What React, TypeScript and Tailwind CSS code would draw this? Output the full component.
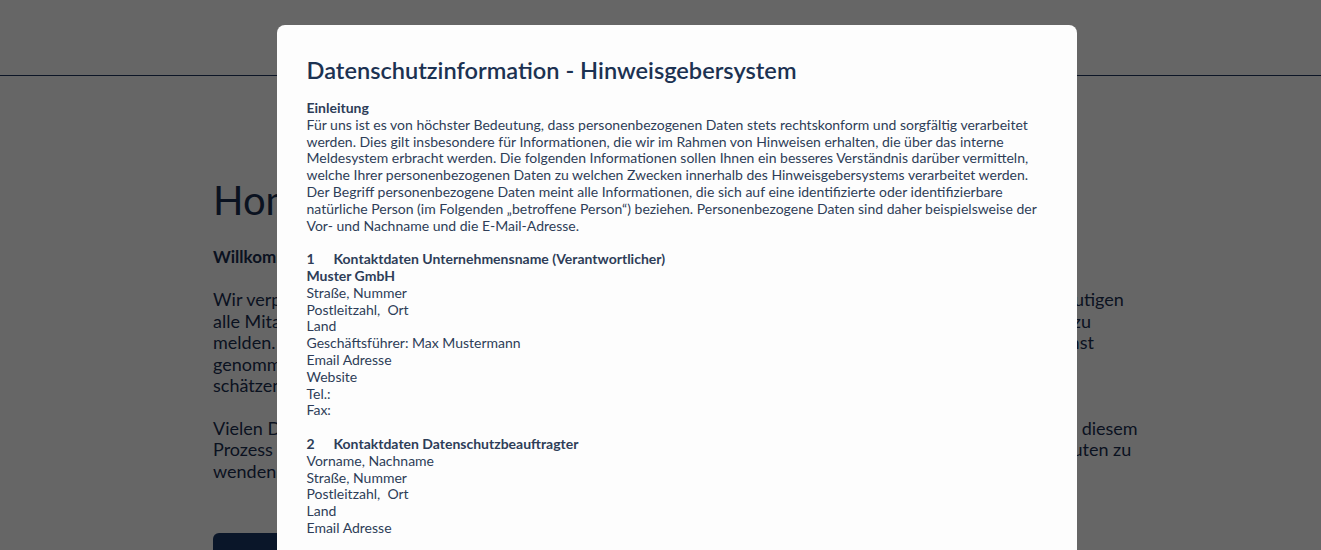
import React from "react";

const font = { fontFamily: "Lato, 'Noto Sans', sans-serif" };

function Line(props: { children: React.ReactNode; bold?: boolean }) {
  return <p className={props.bold ? "font-bold" : ""}>{props.children}</p>;
}

function Heading(props: { num: string; title: string }) {
  return (
    <p className="font-bold">
      <span className="inline-block w-[27px]">{props.num}</span>
      {props.title}
    </p>
  );
}

function Background() {
  return (
    <div className="min-h-[550px] bg-white text-[#1b2f52]">
      <header className="h-[76px] border-b border-[#1e3560]" />
      <main className="pl-[213px] pt-[100px]">
        <h1 className="text-[40px] leading-[48px]">Home</h1>
        <p className="mt-[21px] text-[17px] font-bold leading-6">
          Willkommen in unserem Hinweisgebersystem
        </p>
        <p className="mt-[20px] text-[18px] leading-[21.5px]">
          Wir verpflichten uns zu Integrität und Transparenz in allen Bereichen unseres Unternehmens und deshalb ermutigen
          <br />
          alle Mitarbeitenden sowie externe Partner, Hinweise auf mögliches Fehlverhalten stets vertraulich und sicher zu
          <br />
          melden. Jede Meldung wird von uns sorgfältig geprüft, mit der gebotenen Vertraulichkeit behandelt und so ernst
          <br />
          genommen. Ihre Identität wird dabei geschützt, sofern Sie dies wünschen. Ihr Vertrauen bedeutet uns sehr viel
          <br />
          schätzen Ihren Beitrag zu einer offenen Unternehmenskultur.
        </p>
        <p className="mt-[21px] text-[18px] leading-[21.5px]">
          Vielen Dank für Ihre Unterstützung. Bei Fragen zum Ablauf können Sie sich gerne auch jederzeit vertraulich zu diesem
          <br />
          Prozess informieren oder sich gerne jederzeit direkt an unsere zuständigen Ansprechpartner und Vertrauensleuten zu
          <br />
          wenden.
        </p>
        <button className="mt-[51px] h-[44px] w-[170px] rounded-md bg-[#1b3766]" />
      </main>
    </div>
  );
}

function Modal() {
  return (
    <div className="fixed inset-0 flex justify-center overflow-hidden bg-black/60 pl-[32px] pt-[25px]">
      <div className="h-[700px] w-[800px] rounded-lg bg-[#fdfdfd] px-[30px] pt-[30px]">
        <h2 className="text-[23.6px] font-semibold leading-[30px] text-[#1c3252]">
          Datenschutzinformation - Hinweisgebersystem
        </h2>
        <div className="mt-[15px] text-[14px] leading-[16.8px] text-[#2e3d58]">
          <Line bold>Einleitung</Line>
          <p>
            Für uns ist es von höchster Bedeutung, dass personenbezogenen Daten stets rechtskonform und sorgfältig
            verarbeitet werden. Dies gilt insbesondere für Informationen, die wir im Rahmen von Hinweisen erhalten, die
            über das interne Meldesystem erbracht werden. Die folgenden Informationen sollen Ihnen ein besseres
            Verständnis darüber vermitteln, welche Ihrer personenbezogenen Daten zu welchen Zwecken innerhalb des
            Hinweisgebersystems verarbeitet werden. Der Begriff personenbezogene Daten meint alle Informationen, die
            sich auf eine identifizierte oder identifizierbare natürliche Person (im Folgenden „betroffene Person“)
            beziehen. Personenbezogene Daten sind daher beispielsweise der Vor- und Nachname und die E-Mail-Adresse.
          </p>
          <div className="h-[16.8px]" />
          <Heading num="1" title="Kontaktdaten Unternehmensname (Verantwortlicher)" />
          <Line bold>Muster GmbH</Line>
          <Line>Straße, Nummer</Line>
          <Line>Postleitzahl,&nbsp; Ort</Line>
          <Line>Land</Line>
          <Line>Geschäftsführer: Max Mustermann</Line>
          <Line>Email Adresse</Line>
          <Line>Website</Line>
          <Line>Tel.:</Line>
          <Line>Fax:</Line>
          <div className="h-[16.8px]" />
          <Heading num="2" title="Kontaktdaten Datenschutzbeauftragter" />
          <Line>Vorname, Nachname</Line>
          <Line>Straße, Nummer</Line>
          <Line>Postleitzahl,&nbsp; Ort</Line>
          <Line>Land</Line>
          <Line>Email Adresse</Line>
        </div>
      </div>
    </div>
  );
}

export default function App() {
  return (
    <div className="relative h-[550px] overflow-hidden" style={font}>
      <Background />
      <Modal />
    </div>
  );
}
